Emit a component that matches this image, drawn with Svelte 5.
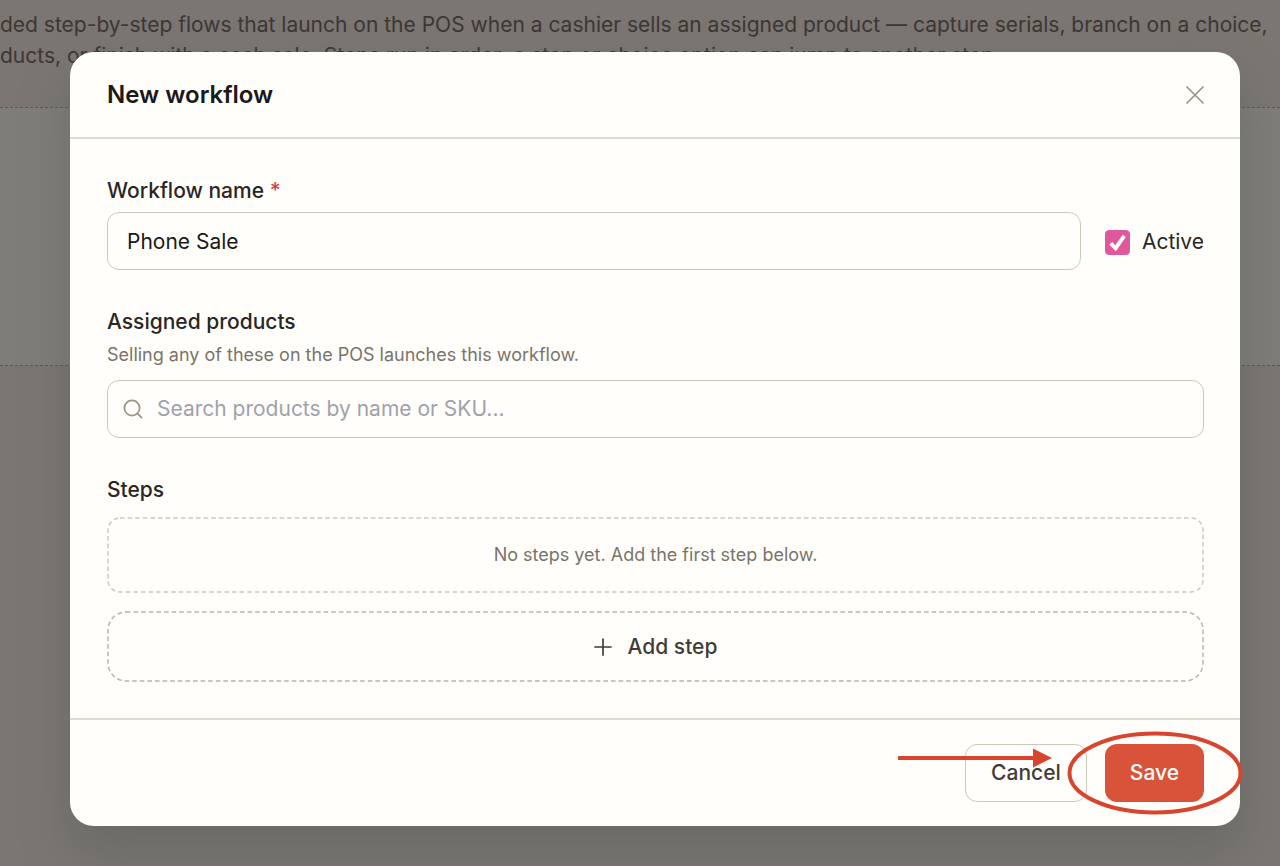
<script lang="ts">
  let name = $state('Phone Sale');
  let active = $state(true);
  let query = $state('');
</script>

<svelte:head>
  <title>Workflows</title>
</svelte:head>

<div class="page">
  <p class="intro">
    ded step-by-step flows that launch on the POS when a cashier sells an assigned product — capture serials, branch on a choice,<br />
    ducts, or finish with a cash sale. Steps run in order; a step or choice option can jump to another step.
  </p>
  <div class="empty-list"></div>
</div>

<div class="backdrop">
  <div class="modal" role="dialog" aria-modal="true" aria-labelledby="modal-title">
    <header>
      <h2 id="modal-title">New workflow</h2>
      <button class="close" type="button" aria-label="Close">
        <svg width="18" height="18" viewBox="0 0 18 18" aria-hidden="true">
          <path d="M1 1l16 16M17 1L1 17" />
        </svg>
      </button>
    </header>

    <div class="body">
      <div class="name-row">
        <div class="field">
          <label for="workflow-name">Workflow name <span class="required">*</span></label>
          <input id="workflow-name" class="text-input" type="text" bind:value={name} />
        </div>
        <label class="active">
          <input type="checkbox" bind:checked={active} />
          <svg class="tick" viewBox="0 0 24 24" aria-hidden="true">
            <path d="M5 13l5 5L19 5" />
          </svg>
          Active
        </label>
      </div>

      <div class="field">
        <label for="product-search">Assigned products</label>
        <p class="hint">Selling any of these on the POS launches this workflow.</p>
        <div class="search">
          <svg width="20" height="20" viewBox="0 0 20 20" aria-hidden="true">
            <circle cx="9" cy="9" r="7.6" />
            <path d="M14.6 14.6L18.6 18.6" />
          </svg>
          <input id="product-search" type="text" placeholder="Search products by name or SKU..." bind:value={query} />
        </div>
      </div>

      <section class="steps">
        <h3>Steps</h3>
        <div class="no-steps">
          <svg class="dashes" aria-hidden="true"><rect x="1" y="1" rx="12" /></svg>
          No steps yet. Add the first step below.
        </div>
        <button class="add-step" type="button">
          <svg class="dashes" aria-hidden="true"><rect x="1" y="1" rx="18" /></svg>
          <svg width="18" height="18" viewBox="0 0 18 18" aria-hidden="true">
            <path d="M9 1v16M1 9h16" />
          </svg>
          Add step
        </button>
      </section>
    </div>

    <footer>
      <button class="cancel" type="button">Cancel</button>
      <button class="save" type="button">Save</button>
      <svg class="callout" width="348" height="86" viewBox="0 0 348 86" aria-hidden="true">
        <path class="shaft" d="M3 28H140" />
        <path class="head" d="M138 18.5L157 28L138 37.5Z" />
        <ellipse cx="260" cy="43" rx="85.5" ry="39.5" />
      </svg>
    </footer>
  </div>
</div>

<style>
  :global(body) {
    margin: 0;
    background: #f6ece4;
    font-family: Inter, "Liberation Sans", sans-serif;
  }

  button,
  input {
    font: inherit;
    box-sizing: border-box;
  }

  svg {
    fill: none;
    stroke: currentColor;
    stroke-width: 1.7;
    stroke-linecap: round;
    stroke-linejoin: round;
  }

  .page {
    min-height: 100vh;
    overflow: hidden;
    padding-top: 9px;
    box-sizing: border-box;
  }

  .intro {
    margin: 0 0 36px;
    font-size: 21px;
    line-height: 31px;
    white-space: nowrap;
    color: #78706a;
  }

  .empty-list {
    height: 257px;
    border: 1px dashed #b5aca4;
    border-width: 1px 0;
    background: #fefaf4;
  }

  .backdrop {
    position: absolute;
    inset: 0;
    padding: 52px 40px 40px 70px;
    background: rgba(0, 0, 0, 0.5);
  }

  .modal {
    border-radius: 24px;
    background: #fffefb;
    box-shadow: 0 26px 50px rgba(80, 90, 80, 0.4);
    color: #292724;
    font-size: 21px;
    line-height: 30px;
  }

  header {
    display: flex;
    align-items: center;
    justify-content: space-between;
    padding: 25px 36px 25px 37px;
    border-bottom: 2px solid #dedcd1;
  }

  h2 {
    margin: 0;
    font-size: 24px;
    line-height: 35px;
    font-weight: 600;
    color: #1a1917;
  }

  .close {
    display: flex;
    padding: 0;
    border: 0;
    background: none;
    color: #9c9484;
  }

  .body {
    display: grid;
    gap: 36px;
    padding: 36px 36px 36px 37px;
  }

  .name-row {
    display: flex;
    align-items: flex-end;
    gap: 24px;
  }

  .field {
    flex: 1;
    display: grid;
  }

  .field > label,
  h3 {
    margin: 0;
    font-size: 21px;
    line-height: 32px;
    font-weight: 500;
  }

  .required {
    color: #cf4444;
  }

  .text-input,
  .search {
    height: 58px;
    border: 1px solid #cbc9ba;
    border-radius: 12px;
    background: #fffefb;
    box-sizing: border-box;
  }

  .text-input {
    width: 100%;
    margin-top: 5px;
    padding: 0 19px;
    color: #1a1917;
  }

  .active {
    position: relative;
    display: flex;
    align-items: center;
    gap: 12px;
    height: 56px;
  }

  .active input {
    appearance: none;
    width: 25px;
    height: 25px;
    margin: 0;
    border: 1px solid #cbc9ba;
    border-radius: 4px;
  }

  .active input:checked {
    border-color: #e0589c;
    background: #e0589c;
  }

  .tick {
    position: absolute;
    left: 1px;
    width: 23px;
    height: 23px;
    color: #fffefb;
    stroke-width: 4;
    stroke-linecap: butt;
    stroke-linejoin: miter;
  }

  .active input:not(:checked) + .tick {
    display: none;
  }

  .hint {
    margin: 3px 0 11px;
    font-size: 18px;
    line-height: 28px;
    color: #79746a;
  }

  .search {
    display: flex;
    align-items: center;
    gap: 14px;
    padding: 0 15px;
    color: #9c9484;
  }

  .search input {
    flex: 1;
    padding: 0;
    border: 0;
    background: none;
    color: #1a1917;
  }

  .search input::placeholder {
    color: #a0a2ab;
    opacity: 1;
  }

  .steps {
    display: grid;
  }

  .no-steps,
  .add-step {
    position: relative;
  }

  .dashes {
    position: absolute;
    inset: 0;
    width: 100%;
    height: 100%;
    color: #cccac0;
    stroke-width: 1.5;
    stroke-dasharray: 4.6 3;
    stroke-linecap: butt;
  }

  .dashes rect {
    width: calc(100% - 2px);
    height: calc(100% - 2px);
  }

  .no-steps {
    margin: 11px 0 18px;
    padding: 23px;
    font-size: 18px;
    text-align: center;
    color: #79746a;
  }

  .add-step {
    display: flex;
    align-items: center;
    justify-content: center;
    gap: 16px;
    height: 71px;
    border: 0;
    background: none;
    font-weight: 500;
    color: #403d38;
  }

  .add-step .dashes {
    color: #b8b5aa;
  }

  footer {
    position: relative;
    display: flex;
    justify-content: flex-end;
    gap: 18px;
    padding: 24px 36px 24px 37px;
    border-top: 2px solid #dedcd1;
  }

  footer button {
    height: 58px;
    padding: 0 25px;
    border: 1px solid #cbc9ba;
    border-radius: 12px;
    background: #fffefb;
    font-weight: 500;
    color: #403d38;
  }

  footer .save {
    border: 0;
    background: #d9523a;
    color: #fffefb;
  }

  .callout {
    position: absolute;
    right: -3px;
    top: 10px;
    color: #d8452f;
    stroke-width: 4;
    stroke-linecap: butt;
    pointer-events: none;
  }

  .callout .head {
    fill: currentColor;
    stroke: none;
  }
</style>
